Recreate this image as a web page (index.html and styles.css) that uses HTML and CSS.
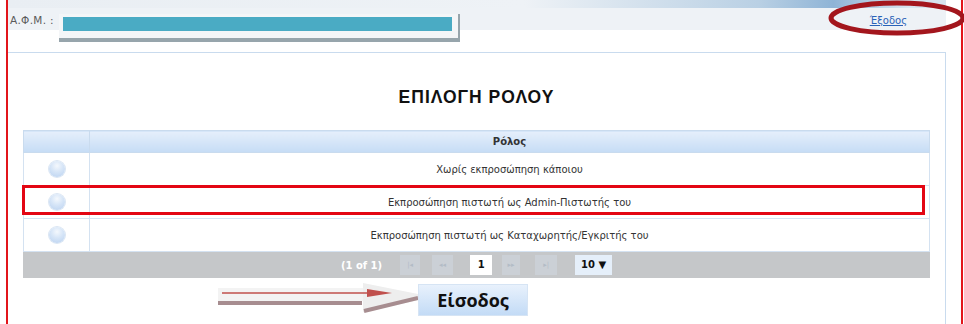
FILE: index.html
```html
<!DOCTYPE html>
<html lang="el">
  <head>
    <meta charset="UTF-8" />
    <title>Επιλογή ρόλου</title>
    <link rel="stylesheet" href="styles.css">
  </head>
  <body>
    <div class="page">
      <div class="banner"></div>

      <div class="topbar">
        <span class="afm-label">Α.Φ.Μ. :</span>
        <div class="afm-box"><div class="afm-value"></div></div>
        <a href="#" class="logout">Έξοδος</a>
      </div>

      <div class="panel">
        <h1>ΕΠΙΛΟΓΗ ΡΟΛΟΥ</h1>

        <table class="roles">
          <thead>
            <tr>
              <th class="col-radio"></th>
              <th>Ρόλος</th>
            </tr>
          </thead>
          <tbody>
            <tr>
              <td class="col-radio"><span class="radio"></span></td>
              <td>Χωρίς εκπροσώπηση κάποιου</td>
            </tr>
            <tr>
              <td class="col-radio"><span class="radio"></span></td>
              <td>Εκπροσώπηση πιστωτή ως Admin-Πιστωτής του</td>
            </tr>
            <tr>
              <td class="col-radio"><span class="radio"></span></td>
              <td>Εκπροσώπηση πιστωτή ως Καταχωρητής/Εγκριτής του</td>
            </tr>
          </tbody>
        </table>

        <div class="pager">
          <span class="pager-info">(1 of 1)</span>
          <span class="pager-btn first">|◂</span>
          <span class="pager-btn prev">◂◂</span>
          <span class="pager-page">1</span>
          <span class="pager-btn next">▸▸</span>
          <span class="pager-btn last">▸|</span>
          <span class="pager-rows">10 ▼</span>
        </div>

        <div class="actions">
          <svg class="pointer" width="205" height="36" viewBox="0 0 205 36">
            <rect x="5" y="8" width="146" height="13" fill="#f3f3f3" />
            <polygon points="150,3 220,17 150,32" fill="#eeeeee" />
            <rect x="5" y="21" width="144" height="4" fill="#a78d90" />
            <line x1="151" y1="31" x2="205" y2="18" stroke="#a78d90" stroke-width="4" />
            <line x1="9" y1="13" x2="156" y2="13" stroke="#c0504d" stroke-width="1.5" />
            <polygon points="154,9 179,13 154,17" fill="#c0504d" />
          </svg>
          <button type="submit" class="enter">Είσοδος</button>
        </div>
      </div>

      <!-- annotations over the screenshot -->
      <div class="mark-row"></div>
      <svg class="mark-logout" width="146" height="38" viewBox="0 0 146 38">
        <ellipse cx="71" cy="18" rx="66" ry="15" fill="none" stroke="#a3161d" stroke-width="5" />
      </svg>
    </div>
  </body>
</html>
```

FILE: styles.css
```css
* {
  box-sizing: border-box;
}
body {
  margin: 0;
  background-color: #ffffff;
  font-family: "DejaVu Sans", Verdana, sans-serif;
  font-size: 10px;
  color: #333333;
}

.page {
  position: relative;
  height: 324px;
  margin: 0 1px 0 6px;
  padding-right: 15px;
  border-left: 2px solid #e2151b;
  border-right: 2px solid #e2151b;
  overflow: visible;
}

.banner {
  height: 8px;
  background: linear-gradient(
    to right,
    #e9eef3 0%,
    #eef2f6 55%,
    #b9d0e4 80%,
    #8fb4d6 88%,
    #d7e4ef 96%
  );
}

.topbar {
  display: flex;
  align-items: flex-start;
  height: 44px;
  background: linear-gradient(#eef2f6 0, #eef2f6 22px, #ffffff 22px);
}

.afm-label {
  width: 49px;
  margin: 6px 0 0 2px;
  font-size: 10.5px;
  letter-spacing: 0.3px;
  color: #5a5a5a;
}

.afm-box {
  margin-top: 6px;
  padding: 3px 6px 7px 4px;
  background-color: #f4f6f8;
  border-right: 2px solid #97a5ac;
  border-bottom: 4px solid #97a5ac;
}

.afm-value {
  width: 389px;
  height: 14px;
  background-color: #4aabc4;
}

.logout {
  margin: 7px 39px 0 auto;
  font-size: 10px;
  color: #2a62b8;
}

.panel {
  border-top: 1px solid #c9dbee;
  border-right: 1px solid #c9dbee;
  padding: 0 15px;
  height: 272px;
}

h1 {
  margin: 33px 0 22px;
  font-family: "Liberation Sans", Arial, sans-serif;
  font-size: 17.5px;
  letter-spacing: 1px;
  line-height: 22px;
  text-align: center;
  color: #111111;
}

.roles {
  width: 100%;
  border-collapse: collapse;
  border: 1px solid #c9dbee;
}

.roles th {
  height: 22px;
  padding: 0;
  font-weight: bold;
  color: #333333;
  background: linear-gradient(#e5effb, #c6dcf5);
  border: 1px solid #c9dbee;
}

.roles td {
  height: 33px;
  padding: 0;
  text-align: center;
  border: 1px solid #d4e2f1;
}

.roles .col-radio {
  width: 66px;
}

.radio {
  display: inline-block;
  width: 16px;
  height: 16px;
  vertical-align: middle;
  border-radius: 50%;
  background: radial-gradient(circle at 50% 30%, #f4f8fd 0%, #d6e5f7 45%, #b9d1f0 100%);
  box-shadow: 0 0 0 1px #dbe6f3;
}

.pager {
  display: flex;
  align-items: center;
  justify-content: center;
  height: 26px;
  background-color: #c5c7c9;
}

.pager-info {
  margin-right: 18px;
  font-weight: bold;
  color: #ffffff;
}

.pager-btn {
  height: 20px;
  line-height: 20px;
  text-align: center;
  font-size: 7px;
  color: #b3bcc6;
  background-color: #cbd0d6;
}

.first {
  width: 20px;
  margin-right: 12px;
}

.prev {
  width: 21px;
  margin-right: 17px;
}

.next {
  width: 18px;
  margin-right: 15px;
}

.last {
  width: 22px;
  margin-right: 18px;
}

.pager-page {
  width: 22px;
  height: 20px;
  margin-right: 10px;
  line-height: 20px;
  text-align: center;
  font-weight: bold;
  color: #111111;
  background-color: #ffffff;
}

.pager-rows {
  width: 37px;
  height: 20px;
  line-height: 20px;
  text-align: center;
  font-weight: bold;
  color: #111111;
  background-color: #e5effa;
}

.actions {
  display: flex;
  align-items: flex-start;
  margin: 2px 0 0 190px;
}

.pointer {
  flex: none;
}

.enter {
  width: 110px;
  height: 32px;
  margin-top: 4px;
  padding: 0;
  font-family: "Open Sans", "Liberation Sans", sans-serif;
  font-size: 18px;
  font-weight: bold;
  color: #111111;
  background: linear-gradient(#e8f1fc, #c3dbf6);
  border: 1px solid #d6e4f4;
}

.mark-row {
  position: absolute;
  left: 14px;
  top: 185px;
  width: 903px;
  height: 30px;
  border: 3px solid #e30613;
}

.mark-logout {
  position: absolute;
  left: 818px;
  top: 0;
}
```
